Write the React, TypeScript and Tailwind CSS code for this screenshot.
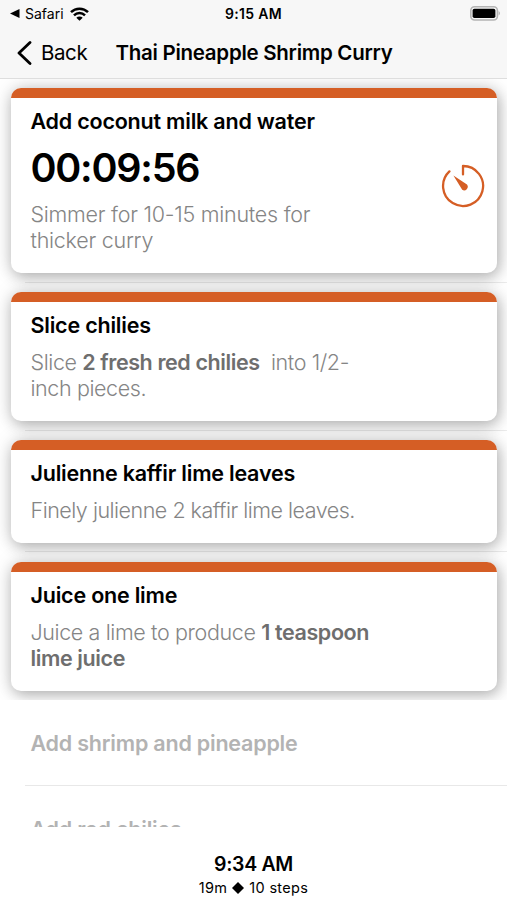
import type { ReactNode } from "react";
import clsx from "clsx";

function WifiIcon() {
  return (
    <svg width="19" height="14" viewBox="0 0 19 14" fill="none" stroke="#000" strokeWidth="2.5">
      <path d="M1 5.1a12.2 12.2 0 0 1 17 0" />
      <path d="M4 8.3a7.8 7.8 0 0 1 11 0" />
      <path d="M9.5 13.8 6.3 10.7a4.6 4.6 0 0 1 6.4 0Z" fill="#000" stroke="none" />
    </svg>
  );
}

function BatteryIcon() {
  return (
    <svg width="31" height="15" viewBox="0 0 31 15">
      <rect x="0.8" y="0.8" width="26.6" height="13.2" rx="3.8" fill="#f7f7f7" stroke="#b4b4b4" strokeWidth="1.6" />
      <rect x="2.6" y="2.8" width="22.8" height="9.2" rx="1.8" fill="#000" />
      <path d="M28.6 5v4.6a2.6 2.6 0 0 0 0-4.6Z" fill="#b4b4b4" />
    </svg>
  );
}

function TimerIcon() {
  return (
    <svg width="44" height="44" viewBox="0 0 44 44" fill="none" stroke="#d55e25" strokeWidth="2.3" strokeLinecap="round">
      <path d="M22 10.4V2a20 20 0 1 1-13.6 5.4" strokeLinejoin="round" />
      <path d="M12.4 11.6 26 20.6a3.6 3.6 0 0 1-4.8 5.2Z" fill="#d55e25" stroke="none" />
    </svg>
  );
}

function StepCard({
  title,
  timer,
  last,
  bodyClass = "tracking-[-0.35px]",
  children,
}: {
  title: string;
  timer?: string;
  last?: boolean;
  bodyClass?: string;
  children: ReactNode;
}) {
  return (
    <li className="relative py-[9.5px] pr-[10px] pl-[10.5px] first:pt-[9.1px] first:pb-[9.9px]">
      {!last && <div className="absolute right-0 bottom-0 left-[25px] h-px bg-black/8" />}
      <div className="relative flex flex-col overflow-hidden rounded-[10px] bg-white shadow-[2px_4px_14px_rgba(0,0,0,0.24),0_0_20px_rgba(0,0,0,0.15)]">
        <div className="h-[9.8px] bg-[#d55e25]" />
        <div className="flex items-center justify-between pt-[10.1px] pr-3 pb-[19.9px] pl-5">
          <div>
            <h2 className="text-[21.5px] leading-[26px] font-semibold tracking-[-0.21px]">{title}</h2>
            {timer && (
              <p className="mt-[9px] text-[39.5px] leading-[50px] font-semibold tracking-[-1.25px]">{timer}</p>
            )}
            <p
              className={clsx(
                "text-[21.5px] leading-[26px] font-light whitespace-pre text-[#858585]",
                timer ? "mt-2" : "mt-[11px]",
                bodyClass
              )}
            >
              {children}
            </p>
          </div>
          {timer && (
            <div className="pt-[11px]">
              <TimerIcon />
            </div>
          )}
        </div>
      </div>
    </li>
  );
}

export default function App() {
  return (
    <div className="flex h-[900px] w-[507px] flex-col overflow-hidden bg-white font-['Inter',sans-serif] text-black">
      <header className="flex h-[79px] flex-col border-b border-[#dedede] bg-[#f7f7f7]">
        <div className="grid h-[27px] grid-cols-3 items-center text-[14px]">
          <div className="flex items-center pl-[10px]">
            <svg width="10" height="9" viewBox="0 0 10 9">
              <path d="M0 4.5 9.5 0v9Z" />
            </svg>
            <span className="mr-1.5 ml-[5px]">Safari</span>
            <WifiIcon />
          </div>
          <span className="text-center font-semibold tracking-[0.3px]">9:15 AM</span>
          <div className="flex justify-end pr-[6px]">
            <BatteryIcon />
          </div>
        </div>
        <div className="relative flex h-[51px] items-center justify-center pt-px">
          <button className="absolute left-[17px] flex items-center text-[20.5px] tracking-[-0.4px]">
            <svg width="15" height="24" viewBox="0 0 15 24" fill="none" stroke="#000" strokeWidth="2.8">
              <path d="M13 1.5 2 12l11 10.5" strokeLinecap="round" strokeLinejoin="round" />
            </svg>
            <span className="ml-[9px]">Back</span>
          </button>
          <h1 className="pl-px text-[20.5px] font-semibold tracking-[-0.27px]">Thai Pineapple Shrimp Curry</h1>
        </div>
      </header>

      <main className="h-[748px] overflow-hidden">
        <ul className="overflow-hidden">
          <StepCard title="Add coconut milk and water" timer="00:09:56" bodyClass="tracking-[-0.25px]">
            {"Simmer for 10-15 minutes for\nthicker curry"}
          </StepCard>
          <StepCard title="Slice chilies" bodyClass="tracking-[-0.4px]">
            Slice <b className="font-semibold text-[#6e6e6e]">2 fresh red chilies</b>
            {"  into 1/2-\ninch pieces."}
          </StepCard>
          <StepCard title="Julienne kaffir lime leaves" bodyClass="tracking-[-0.5px]">
            Finely julienne 2 kaffir lime leaves.
          </StepCard>
          <StepCard title="Juice one lime" last bodyClass="tracking-[-0.38px]">
            Juice a lime to produce <b className="font-semibold text-[#6e6e6e]">{"1 teaspoon\nlime juice"}</b>
          </StepCard>
        </ul>

        {/* upcoming steps */}
        <ul className="text-[21.5px] font-semibold tracking-[-0.21px] text-[#b3b3b3]">
          <li className="ml-[25px] flex h-[85.6px] items-center border-b border-[#e8e8e8] pt-0.5 pl-[5.5px]">
            Add shrimp and pineapple
          </li>
          <li className="ml-[25px] flex h-[86px] items-center pl-[5.5px]">Add red chilies</li>
        </ul>
      </main>

      <footer className="flex flex-col items-center pt-6">
        <p className="text-[19.5px] leading-[26px] font-semibold tracking-[-0.3px]">9:34 AM</p>
        <p className="flex items-center gap-[5px] text-[14.5px] leading-[22px] tracking-[0.3px]">
          19m
          <svg width="12" height="12" viewBox="0 0 12 12">
            <path d="M6 0 12 6 6 12 0 6Z" />
          </svg>
          10 steps
        </p>
      </footer>
    </div>
  );
}
